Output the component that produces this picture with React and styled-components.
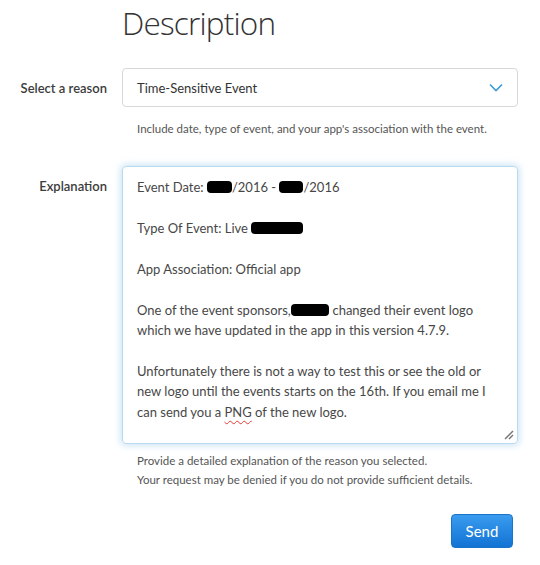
import React from 'react';
import styled, { createGlobalStyle } from 'styled-components';

const Global = createGlobalStyle`
  body { margin: 0; background: #fff; font-family: Lato, "Open Sans", sans-serif; color: #333; }
`;

const Page = styled.div`
  width: 540px;
  padding-top: 3px;
`;

const Title = styled.h1`
  margin: 0 0 0 122px;
  font-family: "Open Sans", sans-serif;
  font-weight: 300;
  font-size: 31.5px;
  line-height: 40px;
  color: #333;
  letter-spacing: -0.8px;
`;

const Form = styled.div`
  display: grid;
  grid-template-columns: 107px 396px;
  column-gap: 15px;
  margin-top: 25px;
`;

const Label = styled.div`
  text-align: right;
  font-size: 13px;
  font-weight: 600;
  color: #3c3c3c;
  line-height: 16px;
  padding-top: ${p => p.$top}px;
`;

const Field = styled.div`
  display: flex;
  flex-direction: column;
  margin-bottom: ${p => p.$gap}px;
`;

const SelectBox = styled.div`
  height: 37px;
  border: 1px solid #d8d8d8;
  border-radius: 4px;
  display: flex;
  align-items: center;
  justify-content: space-between;
  padding: 0 14px;
  font-size: 13px;
  color: #333;
`;

const Hint = styled.div`
  padding-left: 15px;
  font-size: 11.5px;
  line-height: 19px;
  color: #555;
  margin-top: ${p => p.$top}px;
`;

const TextBox = styled.div`
  position: relative;
  height: 256px;
  border: 1px solid #b9d9ef;
  border-radius: 4px;
  box-shadow: 0 0 6px 2px rgba(120, 185, 230, 0.35);
  padding: 10px 14px 10px 14px;
  font-size: 13px;
  line-height: 20.45px;
  color: #474747;
`;

const Line = styled.div`
  min-height: 20.45px;
  white-space: nowrap;
`;

const Blot = styled.span`
  display: inline-block;
  width: ${p => p.$w}px;
  height: 12px;
  background: #000;
  border-radius: 4px;
  vertical-align: -1px;
  margin-left: ${p => p.$ml || 0}px;
`;

const Squiggle = styled.span`
  text-decoration: underline wavy #e53935;
  text-decoration-thickness: 1px;
  text-underline-offset: 3px;
`;

const Grip = styled.svg`
  position: absolute;
  right: 3px;
  bottom: 3px;
`;

const Actions = styled.div`
  display: flex;
  justify-content: flex-end;
  padding-right: 27px;
  margin-top: 25px;
`;

const SendButton = styled.button`
  width: 62px;
  height: 34px;
  border: 1px solid #1a74c7;
  border-radius: 4px;
  background: linear-gradient(#3a9bef, #1273d4);
  color: #fff;
  font-family: Lato, sans-serif;
  font-size: 15px;
  cursor: pointer;
`;

const Chevron = () => (
  <svg width="14" height="9" viewBox="0 0 14 9">
    <path d="M1 1.5 L7 7.5 L13 1.5" fill="none" stroke="#3d9ad8" strokeWidth="1.6" />
  </svg>
);

export default function App() {
  return (
    <Page>
      <Global />
      <Title>Description</Title>
      <Form>
        <Label $top={12}>Select a reason</Label>
        <Field $gap={28}>
          <SelectBox>
            <span>Time-Sensitive Event</span>
            <Chevron />
          </SelectBox>
          <Hint $top={12}>Include date, type of event, and your app's association with the event.</Hint>
        </Field>
        <Label $top={12}>Explanation</Label>
        <Field $gap={0}>
          <TextBox>
            <Line>Event Date: <Blot $w={25} />/2016 - <Blot $w={24} />/2016</Line>
            <Line />
            <Line>Type Of Event: Live <Blot $w={52} /></Line>
            <Line />
            <Line>App Association: Official app</Line>
            <Line />
            <Line>One of the event sponsors, <Blot $w={38} $ml={-3} /> changed their event logo</Line>
            <Line>which we have updated in the app in this version 4.7.9.</Line>
            <Line />
            <Line>Unfortunately there is not a way to test this or see the old or</Line>
            <Line>new logo until the events starts on the 16th. If you email me I</Line>
            <Line>can send you a <Squiggle>PNG</Squiggle> of the new logo.</Line>
            <Grip width="12" height="12" viewBox="0 0 12 12">
              <path d="M11 3 L3 11 M11 7 L7 11" stroke="#777" strokeWidth="1.5" />
            </Grip>
          </TextBox>
          <Hint $top={7}>
            Provide a detailed explanation of the reason you selected.<br />
            Your request may be denied if you do not provide sufficient details.
          </Hint>
        </Field>
      </Form>
      <Actions>
        <SendButton>Send</SendButton>
      </Actions>
    </Page>
  );
}
